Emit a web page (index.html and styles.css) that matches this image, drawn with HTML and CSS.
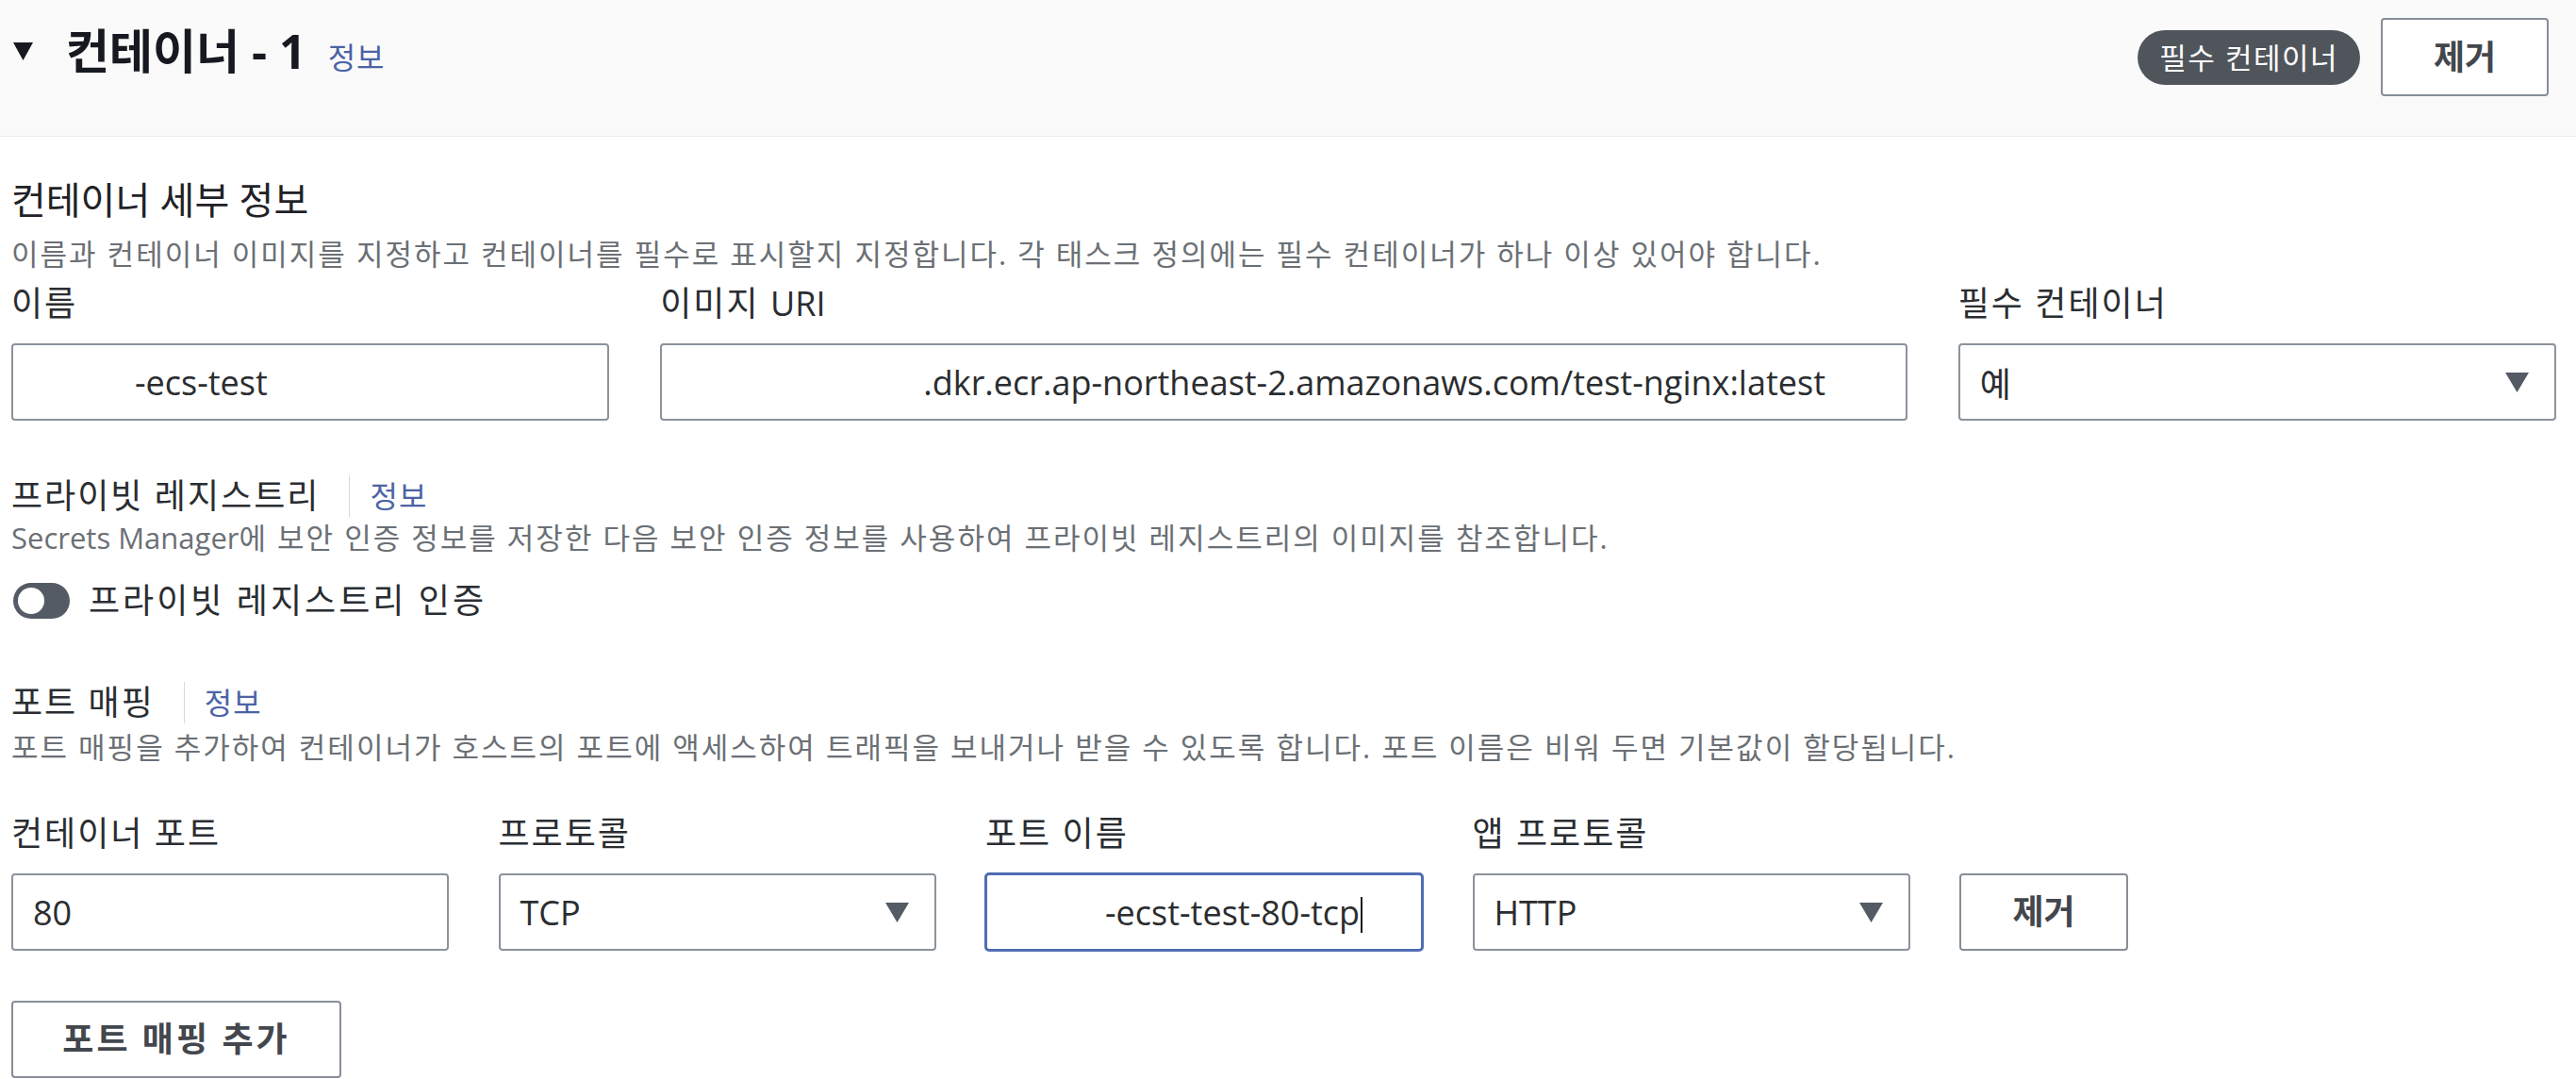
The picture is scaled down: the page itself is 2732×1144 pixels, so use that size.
FILE: index.html
```html
<!DOCTYPE html>
<html lang="ko">
<head>
<meta charset="utf-8">
<title>컨테이너 - 1</title>
<link rel="stylesheet" href="styles.css">
</head>
<body>
<div class="panel">
  <header class="panel-header">
    <div class="title-group">
      <svg class="caret" width="21" height="19" viewBox="0 0 21 19" aria-hidden="true"><polygon points="0,0 21,0 10.5,19" fill="#16191f"/></svg>
      <h2 class="title">컨테이너 - 1</h2>
      <a class="info info-title">정보</a>
    </div>
    <div class="header-actions">
      <span class="badge">필수 컨테이너</span>
      <button class="btn btn-header" type="button">제거</button>
    </div>
  </header>

  <div class="panel-body">
    <section class="sec">
      <h3 class="sec-title-lg">컨테이너 세부 정보</h3>
      <p class="desc desc-first">이름과 컨테이너 이미지를 지정하고 컨테이너를 필수로 표시할지 지정합니다. 각 태스크 정의에는 필수 컨테이너가 하나 이상 있어야 합니다.</p>
      <div class="grid-main">
        <div class="field">
          <label class="label">이름</label>
          <div class="control"><span class="mask mask-name"></span><span>-ecs-test</span></div>
        </div>
        <div class="field span2">
          <label class="label">이미지 <span class="latin">URI</span></label>
          <div class="control"><span class="mask mask-uri"></span><span>.dkr.ecr.ap-northeast-2.amazonaws.com/test-nginx:latest</span></div>
        </div>
        <div class="field">
          <label class="label">필수 컨테이너</label>
          <div class="control select"><span>예</span><svg class="arrow" width="25" height="21" viewBox="0 0 25 21" aria-hidden="true"><polygon points="0,0 25,0 12.5,21" fill="#545b64"/></svg></div>
        </div>
      </div>
    </section>

    <section class="sec sec-registry">
      <div class="sec-head">
        <h3 class="sec-title">프라이빗 레지스트리</h3>
        <a class="info info-sec">정보</a>
      </div>
      <p class="desc desc-tight"><span class="latin">Secrets Manager</span>에 보안 인증 정보를 저장한 다음 보안 인증 정보를 사용하여 프라이빗 레지스트리의 이미지를 참조합니다.</p>
      <div class="toggle-row">
        <span class="toggle" role="switch" aria-checked="false"></span>
        <span class="toggle-label">프라이빗 레지스트리 인증</span>
      </div>
    </section>

    <section class="sec sec-ports">
      <div class="sec-head">
        <h3 class="sec-title">포트 매핑</h3>
        <a class="info info-sec">정보</a>
      </div>
      <p class="desc desc-tight2">포트 매핑을 추가하여 컨테이너가 호스트의 포트에 액세스하여 트래픽을 보내거나 받을 수 있도록 합니다. 포트 이름은 비워 두면 기본값이 할당됩니다.</p>
      <div class="grid-ports">
        <div class="field">
          <label class="label">컨테이너 포트</label>
          <div class="control"><span>80</span></div>
        </div>
        <div class="field">
          <label class="label">프로토콜</label>
          <div class="control select"><span>TCP</span><svg class="arrow" width="25" height="21" viewBox="0 0 25 21" aria-hidden="true"><polygon points="0,0 25,0 12.5,21" fill="#545b64"/></svg></div>
        </div>
        <div class="field">
          <label class="label">포트 이름</label>
          <div class="control focused"><span class="mask mask-port"></span><span class="typing">-ecst-test-80-tcp</span></div>
        </div>
        <div class="field">
          <label class="label">앱 프로토콜</label>
          <div class="control select"><span>HTTP</span><svg class="arrow" width="25" height="21" viewBox="0 0 25 21" aria-hidden="true"><polygon points="0,0 25,0 12.5,21" fill="#545b64"/></svg></div>
        </div>
        <div class="field field-btn">
          <button class="btn btn-remove" type="button">제거</button>
        </div>
      </div>
      <button class="btn btn-add" type="button">포트 매핑 추가</button>
    </section>
  </div>
</div>
</body>
</html>
```

FILE: styles.css
```css
html, body {
  margin: 0;
  padding: 0;
  background: #ffffff;
}

body {
  width: 2732px;
  height: 1144px;
  overflow: hidden;
  font-family: "Open Sans", "Noto Sans CJK KR", sans-serif;
  color: #2a2d31;
}

.panel-header {
  display: flex;
  justify-content: space-between;
  align-items: flex-start;
  height: 145px;
  box-sizing: border-box;
  padding: 19px 29px 0 14px;
  background: #fafafa;
  border-bottom: 1px solid #e9ebed;
}

.title-group {
  display: flex;
  align-items: baseline;
  margin-top: 5px;
  height: 60px;
}

.caret {
  align-self: center;
  margin-right: 35px;
}

.title {
  margin: 0;
  font-size: 50px;
  line-height: 60px;
  font-weight: 700;
  color: #16191f;
}

.info {
  color: #4b63a5;
  text-decoration: none;
  font-size: 32px;
  letter-spacing: 1px;
}

.info-title {
  margin-left: 23px;
  line-height: 60px;
}

.header-actions {
  display: flex;
  align-items: center;
  gap: 22px;
}

.badge {
  display: inline-block;
  height: 58px;
  line-height: 58px;
  padding: 0 23px;
  border-radius: 29px;
  background: #50555c;
  color: #ffffff;
  font-size: 31px;
  letter-spacing: 1.5px;
}

.btn {
  display: flex;
  align-items: center;
  justify-content: center;
  box-sizing: border-box;
  background: #ffffff;
  border: 2px solid #868e96;
  border-radius: 4px;
  font-family: "Open Sans", "Noto Sans CJK KR", sans-serif;
  font-weight: 700;
  font-size: 36px;
  line-height: 1;
  color: #43474d;
  padding: 0;
}

.btn-header {
  width: 178px;
  height: 83px;
}

.panel-body {
  padding: 42px 21px 0 12px;
}

.sec-title-lg {
  margin: 0;
  font-size: 40px;
  line-height: 50px;
  font-weight: 400;
  color: #1f2226;
}

.desc {
  margin: 0;
  font-size: 31px;
  line-height: 40px;
  letter-spacing: 2px;
  color: #6b7075;
}

.latin {
  letter-spacing: 0;
}

.desc-first {
  margin-top: 12px;
}

.grid-main {
  display: grid;
  grid-template-columns: repeat(4, 1fr);
  column-gap: 54px;
  margin-top: 11px;
}

.span2 {
  grid-column: span 2;
}

.field {
  display: flex;
  flex-direction: column;
}

.label {
  display: block;
  font-size: 36px;
  line-height: 44px;
  letter-spacing: 2px;
  margin-bottom: 20px;
  color: #2a2d31;
}

.control {
  display: flex;
  align-items: center;
  height: 82px;
  box-sizing: border-box;
  border: 2px solid #8b939b;
  border-radius: 4px;
  padding: 0 27px 0 21px;
  font-size: 36px;
  color: #2b2d30;
  white-space: nowrap;
  overflow: hidden;
  background: #ffffff;
}

.control.focused {
  border-color: #4f6db3;
  box-shadow: 0 0 0 1px #4f6db3;
}

.select .arrow {
  margin-left: auto;
  flex: none;
}

.mask {
  display: inline-block;
  flex: none;
}

.mask-name {
  width: 108px;
}

.mask-uri {
  width: 256px;
}

.mask-port {
  width: 104px;
}

.typing::after {
  content: "";
  display: inline-block;
  width: 2px;
  height: 38px;
  margin-left: 1px;
  background: #1a1a1a;
  vertical-align: -8px;
}

.sec-registry {
  margin-top: 58px;
}

.sec-head {
  display: flex;
  align-items: center;
  height: 44px;
}

.sec-title {
  margin: 0;
  font-size: 36px;
  line-height: 44px;
  letter-spacing: 2px;
  font-weight: 400;
  color: #2a2d31;
}

.info-sec {
  margin-left: 31px;
  padding-left: 21px;
  border-left: 1px solid #d5d9dd;
  line-height: 44px;
}

.desc-tight {
  margin-top: 2px;
}

.desc-tight2 {
  margin-top: 5px;
}

.toggle-row {
  display: flex;
  align-items: center;
  gap: 20px;
  height: 44px;
  margin-top: 25px;
  padding-left: 2px;
}

.toggle {
  position: relative;
  display: inline-block;
  width: 60px;
  height: 38px;
  border-radius: 19px;
  background: #545b64;
}

.toggle::after {
  content: "";
  position: absolute;
  left: 5px;
  top: 5px;
  width: 28px;
  height: 28px;
  border-radius: 50%;
  background: #ffffff;
}

.toggle-label {
  font-size: 36px;
  line-height: 44px;
  letter-spacing: 3px;
  color: #2a2d31;
}

.sec-ports {
  margin-top: 64px;
}

.grid-ports {
  display: grid;
  grid-template-columns: repeat(4, 464px) 179px;
  column-gap: 52.5px;
  margin-top: 50px;
}

.field-btn {
  justify-content: flex-end;
}

.btn-remove {
  width: 179px;
  height: 82px;
}

.btn-add {
  margin-top: 53px;
  width: 350px;
  height: 82px;
  letter-spacing: 3px;
}
```
